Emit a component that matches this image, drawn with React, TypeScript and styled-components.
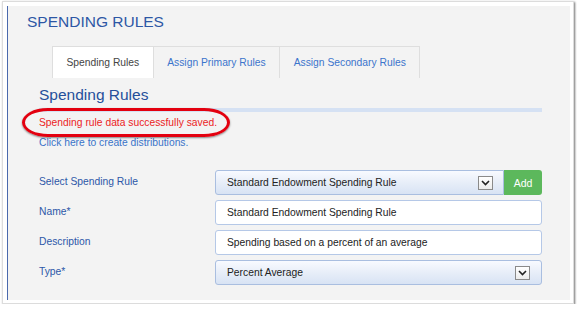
import React from 'react'
import styled, { createGlobalStyle } from 'styled-components'

const GlobalStyle = createGlobalStyle`
  html, body {
    margin: 0;
    padding: 0;
    background: #ffffff;
  }
  body {
    font-family: 'Liberation Sans', Arial, sans-serif;
  }
`

const Shot = styled.div`
  box-sizing: border-box;
  margin: 1px 0 0 2px;
  width: 572px;
  height: 303px;
  padding: 4px 3px 3px 4px;
  background: #ffffff;
  border: 1px solid #dcdcdc;
  box-shadow: 1px 1px 2px rgba(0, 0, 0, 0.55);
`

const Panel = styled.div`
  box-sizing: border-box;
  height: 100%;
  background: #f3f3f3;
  border-left: 1px solid #4a69ad;
  padding: 7px 0 0 19px;
`

const Title = styled.h1`
  margin: 0;
  font-size: 15.5px;
  line-height: 18px;
  font-weight: normal;
  color: #2d57a5;
`

const Tabs = styled.div`
  display: flex;
  margin: 15px 0 0 25px;
`

const Tab = styled.div<{ active?: boolean }>`
  box-sizing: border-box;
  height: 32px;
  display: flex;
  align-items: center;
  padding: 0 13.5px;
  font-size: 10.3px;
  border: 1px solid #dedede;
  border-bottom: none;
  margin-left: -1px;
  &:first-child {
    margin-left: 0;
  }
  background: ${({ active }) => (active ? '#ffffff' : '#f3f3f3')};
  color: ${({ active }) => (active ? '#444444' : '#3b74cc')};
`

const Section = styled.div`
  margin: 8px 28px 0 12px;
`

const Heading = styled.h2`
  margin: 0;
  font-size: 15.5px;
  line-height: 18px;
  font-weight: normal;
  color: #254f9b;
`

const Rule = styled.div`
  height: 4px;
  margin-top: 4px;
  background: #d5e1f3;
`

const Message = styled.div`
  position: relative;
  margin-top: 4px;
  font-size: 10.3px;
  line-height: 14px;
  color: #ec1c24;
`

const Callout = styled.span`
  position: absolute;
  left: -17px;
  top: -8px;
  width: 208px;
  height: 29px;
  box-sizing: border-box;
  border: 3.5px solid #e3000f;
  border-radius: 26px / 14.5px;
  box-shadow: 0 1px 2px rgba(0, 0, 0, 0.45);
`

const Link = styled.div`
  margin-top: 6px;
  font-size: 10.3px;
  line-height: 14px;
  color: #3a73c9;
`

const Form = styled.div`
  display: grid;
  grid-template-columns: 176px 1fr;
  grid-auto-rows: 25px;
  row-gap: 5px;
  margin-top: 20px;
`

const Label = styled.div`
  display: flex;
  align-items: center;
  font-size: 10.3px;
  color: #2d57a8;
  padding-bottom: 2px;
`

const Field = styled.div<{ kind: 'select' | 'input' }>`
  box-sizing: border-box;
  display: flex;
  align-items: center;
  padding: 0 ${({ kind }) => (kind === 'select' ? '11px' : '0')} 0 11px;
  font-size: 10.3px;
  color: #222222;
  border-radius: 3px;
  border: 1px solid ${({ kind }) => (kind === 'select' ? '#a9bee0' : '#b5c8e7')};
  background: ${({ kind }) =>
    kind === 'select' ? 'linear-gradient(to bottom, #f8faff 0%, #e9eff9 45%, #d8e3f4 100%)' : '#ffffff'};
`

const FieldText = styled.span`
  flex: 1;
`

const Arrow = styled.span`
  box-sizing: border-box;
  width: 15px;
  height: 14px;
  display: flex;
  align-items: center;
  justify-content: center;
  background: linear-gradient(to bottom, #ffffff, #ececec);
  border: 1px solid #8a8a8a;
`

const Combo = styled.div`
  display: flex;
`

const ComboField = styled(Field)`
  flex: 1;
  border-radius: 3px 0 0 3px;
  padding-right: 10px;
`

const AddButton = styled.button`
  width: 38px;
  border: none;
  border-radius: 0 3px 3px 0;
  background: #5cb85c;
  color: #ffffff;
  font-family: inherit;
  font-size: 10.5px;
  padding: 0;
`

const Chevron = () => (
  <svg width="9" height="6" viewBox="0 0 9 6">
    <path d="M1 1 L4.5 4.5 L8 1" fill="none" stroke="#222" strokeWidth="1.6" />
  </svg>
)

export default function App() {
  return (
    <>
      <GlobalStyle />
      <Shot>
        <Panel>
          <Title>SPENDING RULES</Title>
          <Tabs>
            <Tab active>Spending Rules</Tab>
            <Tab>Assign Primary Rules</Tab>
            <Tab>Assign Secondary Rules</Tab>
          </Tabs>
          <Section>
            <Heading>Spending Rules</Heading>
            <Rule />
            <Message>
              Spending rule data successfully saved.
              <Callout />
            </Message>
            <Link>Click here to create distributions.</Link>
            <Form>
              <Label>Select Spending Rule</Label>
              <Combo>
                <ComboField kind="select">
                  <FieldText>Standard Endowment Spending Rule</FieldText>
                  <Arrow>
                    <Chevron />
                  </Arrow>
                </ComboField>
                <AddButton>Add</AddButton>
              </Combo>
              <Label>Name*</Label>
              <Field kind="input">Standard Endowment Spending Rule</Field>
              <Label>Description</Label>
              <Field kind="input">Spending based on a percent of an average</Field>
              <Label>Type*</Label>
              <Field kind="select">
                <FieldText>Percent Average</FieldText>
                <Arrow>
                  <Chevron />
                </Arrow>
              </Field>
            </Form>
          </Section>
        </Panel>
      </Shot>
    </>
  )
}
